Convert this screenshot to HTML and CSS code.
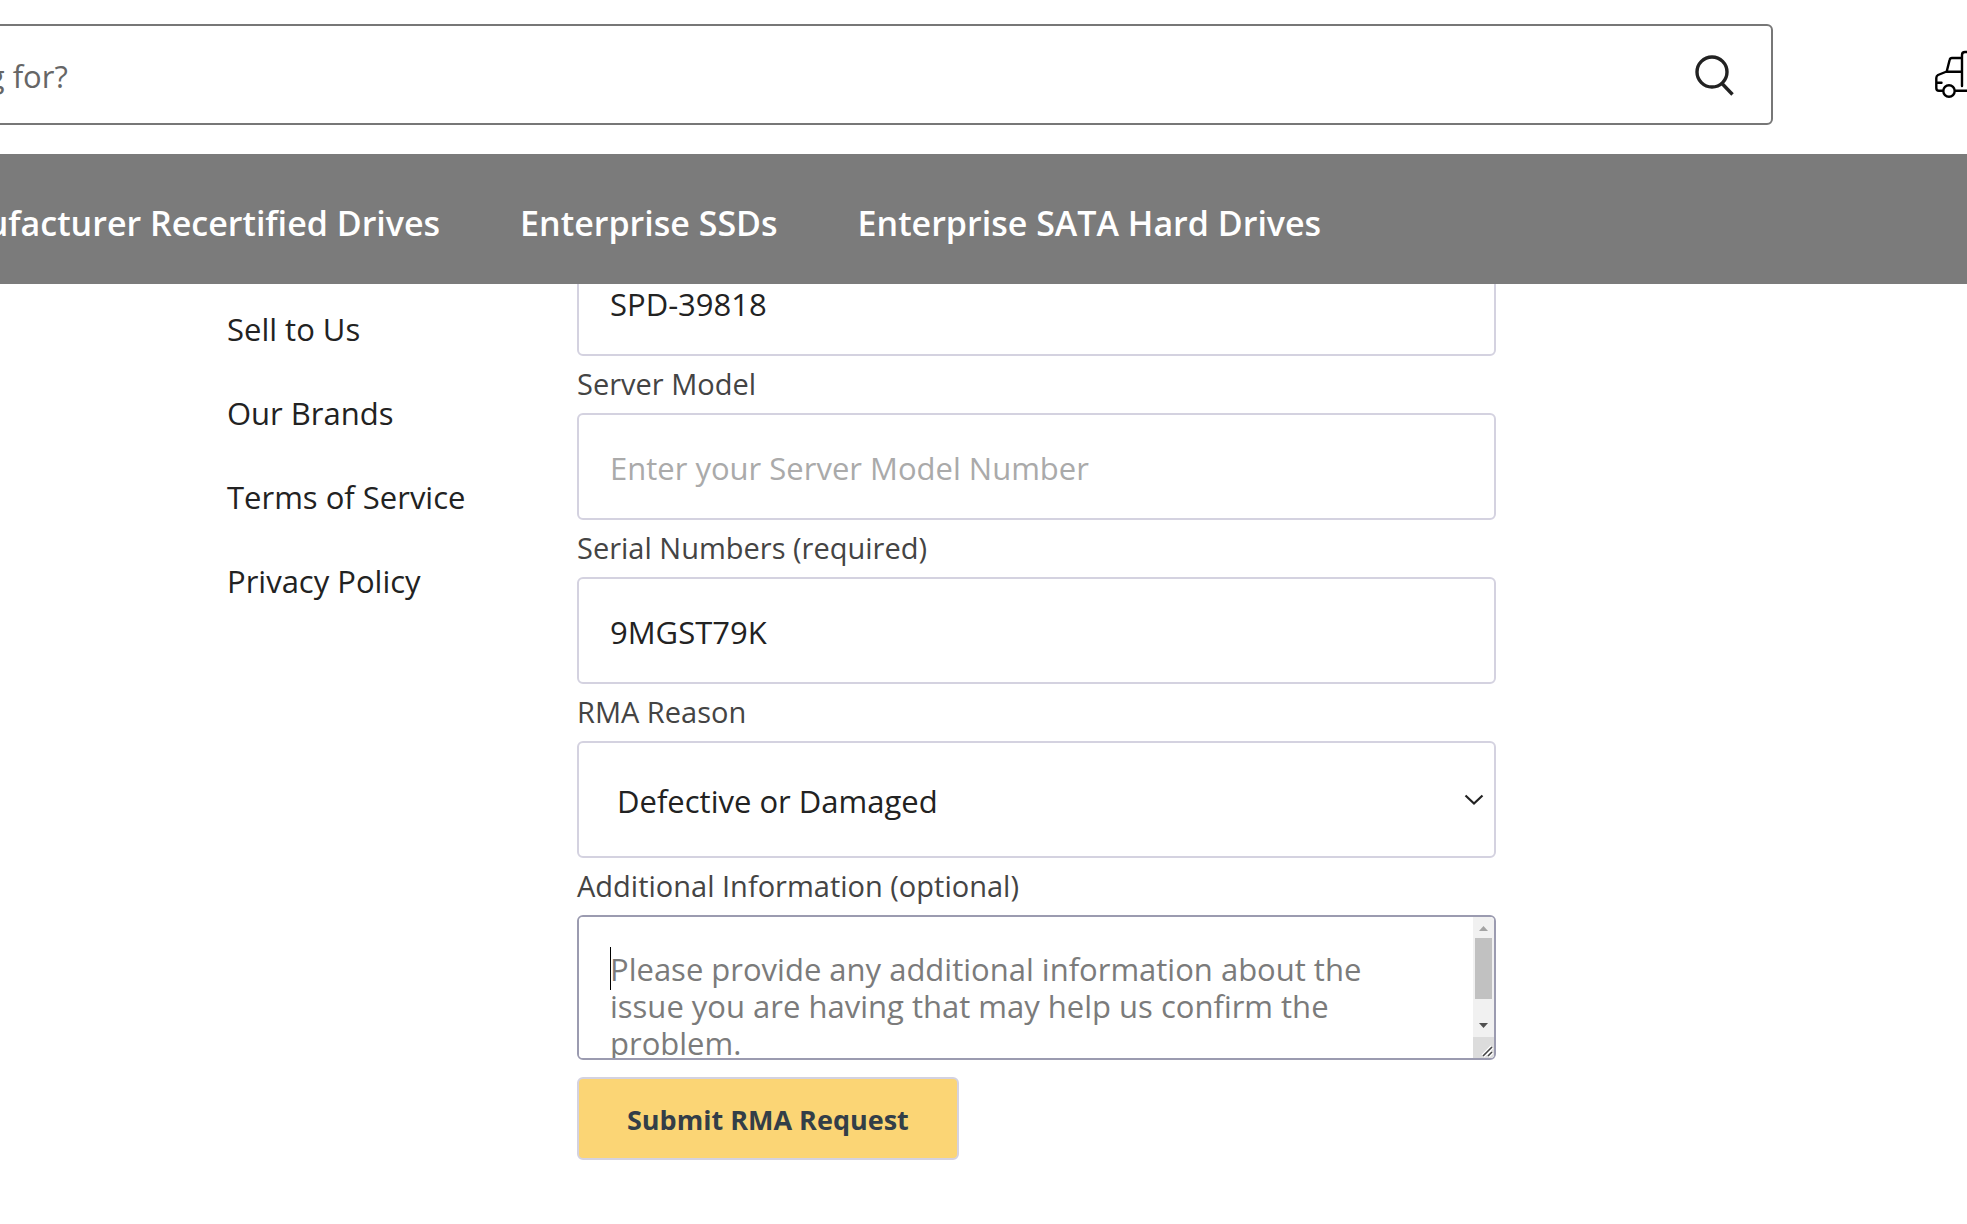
FILE: index.html
```html
<!DOCTYPE html>
<html lang="en">
<head>
<meta charset="utf-8">
<meta name="viewport" content="width=device-width, initial-scale=1">
<title>RMA Request</title>
<link rel="stylesheet" href="styles.css">
</head>
<body>
<header class="site-header">
  <div class="masthead">
    <form class="search" role="search">
      <input class="search-input" type="search" aria-label="Search" placeholder="What are you looking for?">
      <button class="search-button" type="submit" aria-label="Search">
        <svg width="44" height="44" viewBox="0 0 44 44" fill="none" stroke="#222" stroke-width="3.4"><circle cx="18" cy="18" r="15"/><path d="M28 29.500L38.500 40.500"/></svg>
      </button>
    </form>
    <a class="track" href="#" aria-label="Track order">
      <svg width="84" height="56" viewBox="0 0 84 56" fill="none" stroke="#000" stroke-width="2.400" stroke-linecap="round" stroke-linejoin="round"><path d="M32 41V10Q32 7 35 7H77V45.700H25.500M32 13H22Q20 13 19.600 15L16.700 26.500L8 30Q6.300 31 6.300 33V43Q6.300 45.700 9 45.700H13M16.700 26.700H32M6.300 37.700H11.500"/><circle cx="19" cy="46" r="5.700"/></svg>
    </a>
  </div>
  <nav class="site-nav" aria-label="Categories">
    <a href="#">Manufacturer Recertified Drives</a>
    <a href="#">Enterprise SSDs</a>
    <a href="#">Enterprise SATA Hard Drives</a>
  </nav>
</header>
<main class="page">
  <nav class="side-links" aria-label="Information">
    <a href="#">Sell to Us</a>
    <a href="#">Our Brands</a>
    <a href="#">Terms of Service</a>
    <a href="#">Privacy Policy</a>
  </nav>
  <form class="rma-form">
    <input class="field" type="text" aria-label="Order Number" value="SPD-39818">
    <label class="label" for="server">Server Model</label>
    <input class="field" id="server" type="text" placeholder="Enter your Server Model Number">
    <label class="label" for="serials">Serial Numbers (required)</label>
    <input class="field" id="serials" type="text" value="9MGST79K">
    <label class="label" for="reason">RMA Reason</label>
    <div class="select-wrap">
      <select class="field select" id="reason"><option>Defective or Damaged</option></select>
      <svg class="chevron" width="20" height="12" viewBox="0 0 20 12" fill="none" stroke="#222" stroke-width="2.200"><path d="M1.500 1.500L10 9.500L18.500 1.500"/></svg>
    </div>
    <label class="label" for="info">Additional Information (optional)</label>
    <div class="textarea-wrap">
      <textarea class="field textarea" id="info" placeholder="Please provide any additional information about the issue you are having that may help us confirm the problem."></textarea>
      <span class="caret"></span>
      <svg class="scrollbar" width="21" height="141" viewBox="0 0 21 141" aria-hidden="true">
        <path fill="#f1f1f1" d="M0 0H21V141H0z"/>
        <path fill="#a3a3a3" d="M6 14L10.500 9L15 14z"/>
        <path fill="#c1c1c1" d="M2 21H19V82H2z"/>
        <path fill="#505050" d="M6 106L10.500 111L15 106z"/>
        <path fill="#dcdcdc" d="M0 120H21V141H0z"/>
        <path stroke="#fff" stroke-width="4" d="M10 139L19 130M15 139L19 135"/>
        <path stroke="#444" stroke-width="1.600" d="M10 139L19 130M15 139L19 135"/>
      </svg>
    </div>
    <button class="submit" type="submit">Submit RMA Request</button>
  </form>
</main>
</body>
</html>
```
FILE: styles.css
```css
* { box-sizing: border-box; }

body {
  margin: 0;
  overflow-x: hidden;
  background: #fff;
  color: #222;
  font-family: "Segoe UI", "Open Sans", "Noto Sans", sans-serif;
  font-size: 31px;
}

a { color: inherit; text-decoration: none; }
input, select, textarea, button { font: inherit; color: inherit; }

.site-header {
  position: relative;
  z-index: 1;
  overflow: hidden;
}

.masthead {
  display: flex;
  align-items: flex-start;
  gap: 157px;
  margin-left: -335px;
  padding: 24px 0 29px;
  background: #fff;
}

.search {
  display: flex;
  flex: 1;
  height: 101px;
  border: 2px solid #777;
  border-radius: 6px;
}

.search-input {
  flex: 1;
  min-width: 0;
  padding: 2px 32px 0;
  border: 0;
  outline: 0;
  background: none;
  appearance: none;
}

.search-input::placeholder { color: #666; opacity: 1; }

.search-button {
  width: 110px;
  padding: 12px 0 0;
  border: 0;
  background: none;
}

.track {
  width: 37px;
  padding-top: 21px;
}

.track svg { display: block; }

.site-nav {
  display: flex;
  align-items: center;
  gap: 80px;
  height: 130px;
  margin-left: -86px;
  padding-top: 8px;
  background: #7b7b7b;
  color: #fff;
  font-size: 34px;
  font-weight: 600;
  white-space: nowrap;
}

.page {
  display: grid;
  grid-template-columns: 350px 1fr;
  margin-top: -35px;
  padding: 0 471px 64px 227px;
}

.side-links {
  display: flex;
  flex-direction: column;
  gap: 40px;
  padding-top: 58px;
  line-height: 44px;
}

.rma-form {
  display: flex;
  flex-direction: column;
}

.label {
  padding-bottom: 1px;
  color: #444;
  font-size: 29px;
  line-height: 56px;
}

.field {
  display: block;
  width: 100%;
  height: 107px;
  padding: 2px 31px 0;
  border: 2px solid #d4d2e0;
  border-radius: 6px;
  outline: 0;
  background: #fff;
}

.field::placeholder { color: #aaa; opacity: 1; }

.select-wrap, .textarea-wrap { position: relative; }

.select {
  height: 117px;
  padding: 2px 38px 0;
  appearance: none;
}

.chevron {
  position: absolute;
  top: 53px;
  right: 12px;
  pointer-events: none;
}

.textarea {
  height: 145px;
  padding: 34px 52px 0 31px;
  border-color: #9b9bb0;
  line-height: 37px;
  resize: none;
}

.textarea::placeholder { color: #7b7b7b; }

.scrollbar {
  position: absolute;
  top: 2px;
  right: 2px;
  border-radius: 0 4px 4px 0;
  pointer-events: none;
}

.caret {
  position: absolute;
  top: 32px;
  left: 33px;
  width: 1px;
  height: 43px;
  background: #000;
}

.submit {
  align-self: flex-start;
  height: 83px;
  margin-top: 17px;
  padding: 2px 48px 0;
  border: 2px solid #d4d2e0;
  border-radius: 6px;
  background: #fbd575;
  color: #333e48;
  font-size: 27px;
  font-weight: 700;
}
```
